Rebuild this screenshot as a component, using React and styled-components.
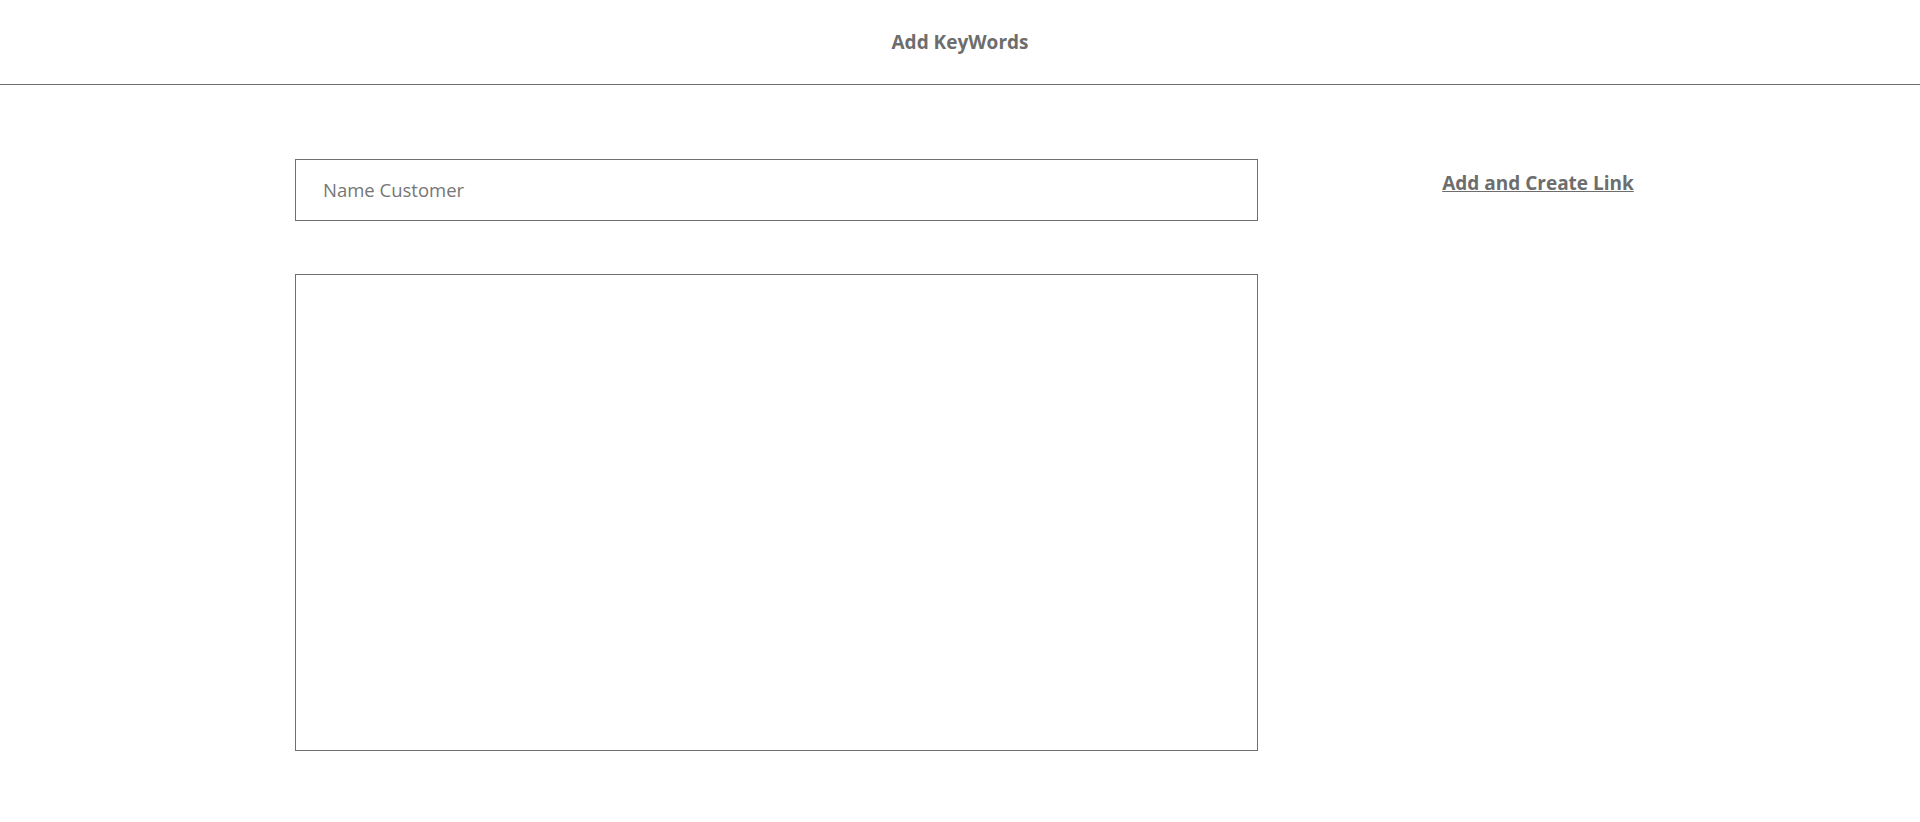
import React from 'react';
import styled, { createGlobalStyle } from 'styled-components';

const GlobalStyle = createGlobalStyle`
  html, body {
    margin: 0;
    padding: 0;
    background: #fff;
    font-family: "Open Sans", "Noto Sans", "Liberation Sans", sans-serif;
    color: #6d6d6d;
  }
`;

const Header = styled.header`
  height: 84px;
  display: flex;
  align-items: center;
  justify-content: center;
  border-bottom: 1px solid #6f6f6f;
`;

const Title = styled.h1`
  margin: 0;
  font-size: 19px;
  font-weight: 700;
  color: #6d6d6d;
`;

const Main = styled.main`
  display: flex;
  padding: 74px 102px 0 295px;
`;

const Form = styled.div`
  width: 963px;
  display: flex;
  flex-direction: column;
  gap: 53px;
`;

const NameInput = styled.input`
  box-sizing: border-box;
  width: 100%;
  height: 62px;
  padding: 0 27px 2px;
  border: 1px solid #6f6f6f;
  border-radius: 0;
  outline: none;
  font-family: inherit;
  font-size: 18.5px;
  color: #555;

  &::placeholder {
    color: #767676;
  }
`;

const KeywordsArea = styled.textarea`
  box-sizing: border-box;
  width: 100%;
  height: 477px;
  padding: 16px 27px;
  border: 1px solid #6f6f6f;
  border-radius: 0;
  outline: none;
  resize: none;
  font-family: inherit;
  font-size: 18.5px;
  color: #555;
`;

const Side = styled.div`
  flex: 1;
  display: flex;
  justify-content: center;
  padding-top: 11px;
`;

const CreateLink = styled.a`
  height: fit-content;
  font-size: 19px;
  font-weight: 700;
  color: #6d6d6d;
  text-decoration: underline;
  cursor: pointer;
`;

export default function App() {
  return (
    <>
      <GlobalStyle />
      <Header>
        <Title>Add KeyWords</Title>
      </Header>
      <Main>
        <Form>
          <NameInput placeholder="Name Customer" />
          <KeywordsArea />
        </Form>
        <Side>
          <CreateLink>Add and Create Link</CreateLink>
        </Side>
      </Main>
    </>
  );
}
